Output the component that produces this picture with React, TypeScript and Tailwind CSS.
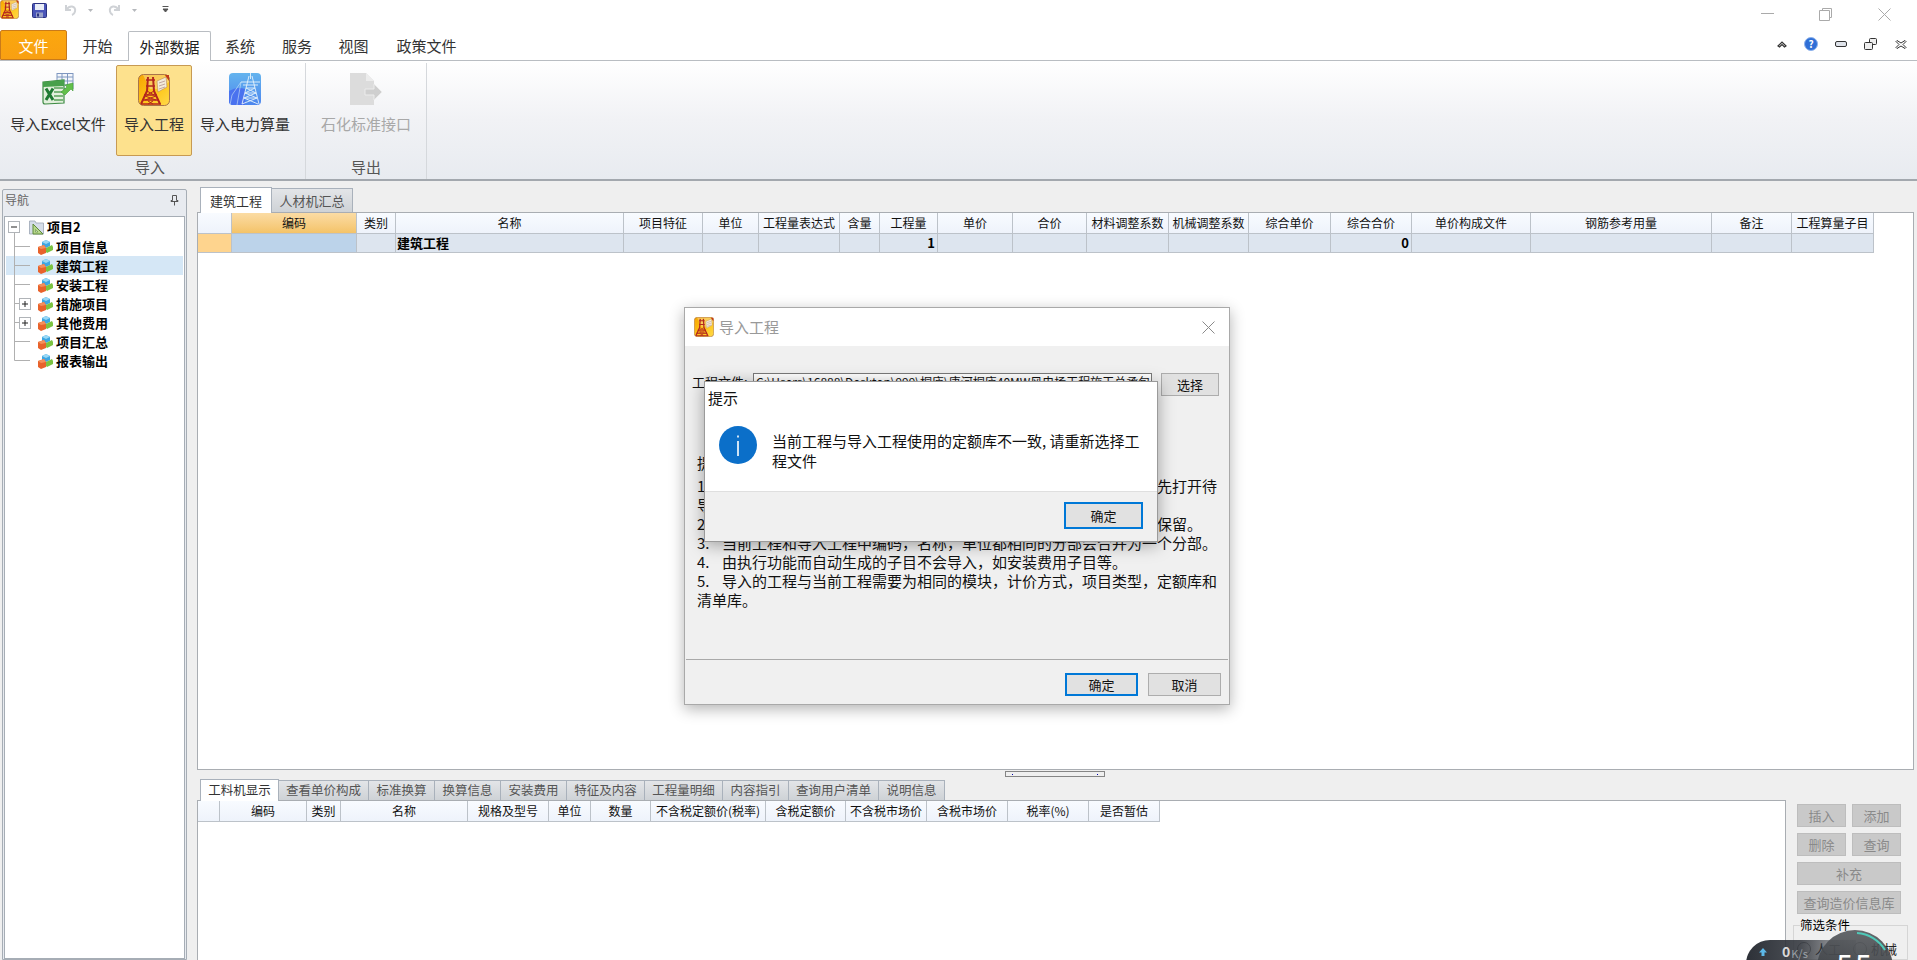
import React from "react";

const Logo = ({ s }: { s: number }) => (
  <svg width={s} height={s} viewBox="0 0 32 32" className="shrink-0">
    <defs>
      <linearGradient id="lg1" x1="0" y1="0" x2="1" y2="1">
        <stop offset="0" stopColor="#f7a400" />
        <stop offset="0.6" stopColor="#ffc81e" />
        <stop offset="1" stopColor="#ffd94a" />
      </linearGradient>
    </defs>
    <rect x="0.5" y="0.5" width="31" height="31" rx="5" fill="url(#lg1)" stroke="#a9744a" />
    <path d="M5 1 H26 L31 6 V8 L22 15 H12 Z" fill="#f6e2b0" opacity="0.45" />
    <path d="M19 7 L28 3 L29 13 L20 18 Z" fill="#f3ead8" stroke="#b98a55" strokeWidth="0.6" />
    <path d="M21 9 L27 7 M21 12 L27 10 M21 15 L27 13" stroke="#a88" strokeWidth="0.7" />
    <path d="M27 1 L31 1 L31 7 Z" fill="#c0391b" />
    <path d="M10 3 L9 17 L3 30 M15 3 L16 17 L22 30" fill="none" stroke="#b3261e" strokeWidth="2" />
    <path d="M8 6 H17 M8 12 H17 M6 21 H19 M4 26 H21 M3 30 H23" stroke="#b3261e" strokeWidth="1.6" />
    <path d="M9 17 L16 21 M16 17 L9 21 M7 22 L18 26 M18 22 L7 26 M10 27 L15 30 M15 27 L10 30" stroke="#b3261e" strokeWidth="1" />
  </svg>
);

const ExcelIcon = () => (
  <svg width="32" height="32" viewBox="0 0 32 32">
    <rect x="15" y="0.5" width="16" height="15" fill="#f3f6fb" stroke="#7f97c0" />
    <path d="M15 4 H31 M15 8 H31 M15 12 H31 M20 0 V16 M25.500 0 V16" stroke="#7f97c0" strokeWidth="1" />
    <path d="M1 9 L22 7 V30 L3 31 Q1 31 1 29 Z" fill="#e2efdc" stroke="#3d8b43" strokeWidth="1.2" />
    <path d="M1 9 L22 7 V13 L1 14 Z" fill="#47a04b" />
    <path d="M12 15 H21 M12 19 H21 M12 23 H21 M12 27 H21" stroke="#58a35a" strokeWidth="1.6" />
    <path d="M4 15.500 L11 27 M11 15.500 L4 27" stroke="#1f7a33" strokeWidth="3" />
    <path d="M19 19 L25 14 L23 12 L31 10 L31 18 L29 16 L23 22 Z" fill="#62bf4a" stroke="#3f9a35" strokeWidth="0.6" />
  </svg>
);

const PowerIcon = () => (
  <svg width="32" height="32" viewBox="0 0 32 32">
    <defs>
      <linearGradient id="pw" x1="0" y1="0" x2="0" y2="1">
        <stop offset="0" stopColor="#64b4ee" />
        <stop offset="1" stopColor="#4d86ee" />
      </linearGradient>
    </defs>
    <rect width="32" height="32" rx="4" fill="url(#pw)" />
    <path d="M0 18 Q8 13 16 16 V32 H4 Q0 32 0 28 Z" fill="#4a72ef" />
    <path d="M20 3 L17 15 L13 31 M23 3 L26 15 L30 31 M21.500 0 V6 M12 9 H31 M14 12 H29 M17 15 H26 M16 20 H27 M15 25 H28 M17 15 L27 20 M26 15 L16 20 M16 20 L28 25 M27 20 L15 25 M15 25 L29 31 M28 25 L13 31" fill="none" stroke="#e6f3fb" strokeWidth="0.9" />
    <path d="M12 9 L3 22 L1 32 M12 9 L8 32" fill="none" stroke="#cfe6f7" strokeWidth="0.6" />
  </svg>
);

const DocDisabled = () => (
  <svg width="32" height="32" viewBox="0 0 32 32">
    <path d="M0 0 H16 L24 8 V32 H0 Z" fill="#dcdcdc" />
    <path d="M16 0 V8 H24 Z" fill="#ececec" />
    <path d="M15 16 H24 V11 L32 19 L24 27 V22 H15 Z" fill="#cfcfcf" stroke="#ececec" />
  </svg>
);

const SaveIcon = () => (
  <svg width="15" height="15" viewBox="0 0 15 15">
    <rect x="0.500" y="0.500" width="14" height="14" rx="1" fill="#4a55b8" stroke="#2b3280" />
    <rect x="3" y="1" width="9" height="6" fill="#e9edf6" />
    <rect x="4" y="9.500" width="7" height="5" fill="#9aa2c8" />
    <rect x="5" y="10.500" width="2" height="3" fill="#2b3280" />
  </svg>
);

const Undo = ({ flip }: { flip?: boolean }) => (
  <svg width="13" height="14" viewBox="0 0 13 14" className={flip ? "-scale-x-100" : ""}>
    <path d="M2 2 V7 H7 M2.500 6.500 Q5 3 8 3.500 Q12 4.500 11 8.500 Q10.500 11 8 12" fill="none" stroke="#cfd2d6" strokeWidth="2" />
  </svg>
);

const Caret = () => (
  <svg width="5" height="3" viewBox="0 0 5 3">
    <path d="M0 0 H5 L2.500 3 Z" fill="#b5b8bc" />
  </svg>
);

const Cube = () => (
  <svg width="15" height="16" viewBox="0 0 15 16" className="shrink-0">
    <path d="M4 3 L8 1 L12 3 V7 L8 9 L4 7 Z" fill="#3ea7e2" />
    <path d="M4 3 L8 5 L12 3 L8 1 Z" fill="#9ad8f5" />
    <path d="M8 9 L14 6 L15 8 V11 L9 14 L7 12 Z" fill="#7cc341" />
    <path d="M0 8 L6 6 L8 9 V14 L3 16 L0 14 Z" fill="#e8622b" />
    <path d="M0 8 L6 6 L8 9 L3 10 Z" fill="#f58f5b" />
  </svg>
);

const FolderTri = () => (
  <svg width="15" height="15" viewBox="0 0 15 15" className="shrink-0">
    <path d="M0.500 1 H6 L7 3 H14.500 V14 H0.500 Z" fill="#d5dde8" stroke="#9aa5b4" strokeWidth="0.8" />
    <path d="M4 4 L14 14 H4 Z" fill="#b7d88c" stroke="#5e8a3a" />
    <path d="M6.500 9.500 L9 12 H6.500 Z" fill="#eef4e4" stroke="#5e8a3a" strokeWidth="0.6" />
  </svg>
);

const Connector = ({ last, box }: { last?: boolean; box?: boolean }) => (
  <svg width="32" height="19" viewBox="0 0 32 19" className="shrink-0">
    <path d={last ? "M8.500 0 V9.500" : "M8.500 0 V19"} stroke="#b0b0b0" fill="none" />
    <path d={box ? "M8.500 9.500 H13" : "M8.500 9.500 H24"} stroke="#b0b0b0" fill="none" />
    {box && (
      <g>
        <rect x="13.500" y="4.500" width="11" height="11" fill="#fff" stroke="#b0b4b8" />
        <path d="M16 10 H22 M19 7 V13" stroke="#222" />
      </g>
    )}
  </svg>
);

const treeRows = [
  { t: "项目信息" },
  { t: "建筑工程", sel: true },
  { t: "安装工程" },
  { t: "措施项目", box: true },
  { t: "其他费用", box: true },
  { t: "项目汇总" },
  { t: "报表输出", last: true },
];

const topCols = ["", "编码", "类别", "名称", "项目特征", "单位", "工程量表达式", "含量", "工程量", "单价", "合价", "材料调整系数", "机械调整系数", "综合单价", "综合合价", "单价构成文件", "钢筋参考用量", "备注", "工程算量子目"];
const botCols = ["", "编码", "类别", "名称", "规格及型号", "单位", "数量", "不含税定额价(税率)", "含税定额价", "不含税市场价", "含税市场价", "税率(%)", "是否暂估"];
const botTabs = [
  ["工料机显示", "w-[79px]"],
  ["查看单价构成", "w-[90px]"],
  ["标准换算", "w-[66px]"],
  ["换算信息", "w-[66px]"],
  ["安装费用", "w-[66px]"],
  ["特征及内容", "w-[78px]"],
  ["工程量明细", "w-[78px]"],
  ["内容指引", "w-[66px]"],
  ["查询用户清单", "w-[90px]"],
  ["说明信息", "w-[66px]"],
];

const cellBase = "flex items-center justify-center border-r border-b border-[#bcc2c9] h-[21px] text-[12px] text-[#111] whitespace-nowrap overflow-hidden bg-gradient-to-b from-[#f8fbff] to-[#eef3fb]";

const GrayBtn = ({ t, w }: { t: string; w: string }) => (
  <div className={`${w} h-[23px] flex items-center justify-center bg-[#c9c9c9] border border-[#bdbdbd] text-[13px] text-[#8a8a8a]`}>{t}</div>
);

const DlgBtn = ({ t, primary, w }: { t: string; primary?: boolean; w: string }) => (
  <div className={`${w} flex items-center justify-center bg-[#e1e1e1] text-[13px] text-[#111] ${primary ? "border-2 border-[#0078d7]" : "border border-[#adadad]"}`}>{t}</div>
);

export default function App() {
  return (
    <div className="relative w-[1917px] h-[960px] overflow-hidden flex flex-col bg-[#efefef] font-['Noto_Sans_CJK_SC','Noto_Sans',sans-serif] text-[#222]">
      {/* title bar */}
      <div className="h-[30px] bg-white flex items-start shrink-0">
        <div className="mt-0"><Logo s={19} /></div>
        <div className="ml-[13px] mt-[3px]"><SaveIcon /></div>
        <div className="ml-[17px] mt-[3px]"><Undo /></div>
        <div className="ml-[11px] mt-[9px]"><Caret /></div>
        <div className="ml-[15px] mt-[3px]"><Undo flip /></div>
        <div className="ml-[11px] mt-[9px]"><Caret /></div>
        <svg width="7" height="8" viewBox="0 0 7 8" className="ml-[25px] mt-[6px]">
          <path d="M0.500 0.500 H6.500 M1 3 H6 L3.500 6 Z" stroke="#555" fill="#555" />
        </svg>
        <div className="ml-auto flex items-start">
          <div className="w-[13px] h-px bg-[#aaa] mt-[13px] mr-[45px]" />
          <svg width="13" height="13" viewBox="0 0 13 13" className="mt-[8px] mr-[46px]">
            <path d="M3.500 2.500 V0.500 H12.500 V9.500 H10.500 M0.500 2.500 H10.500 V12.500 H0.500 Z" fill="none" stroke="#aaa" />
          </svg>
          <svg width="13" height="13" viewBox="0 0 13 13" className="mt-[8px] mr-[26px]">
            <path d="M0.500 0.500 L12.500 12.500 M12.500 0.500 L0.500 12.500" stroke="#aaa" />
          </svg>
        </div>
      </div>

      {/* tab row */}
      <div className="h-[31px] shrink-0 bg-white border-b border-[#b9bdc2] flex items-end text-[15px] leading-[29px] text-[#333]">
        <div className="w-[67px] h-[30px] flex items-center justify-center rounded-t-[2px] border border-[#c97a1a] bg-gradient-to-b from-[#fba70e] to-[#f9a012] text-white">文件</div>
        <div className="w-[61px] h-[29px] text-center">开始</div>
        <div className="w-[83px] h-[30px] -mb-px text-center bg-white border border-b-0 border-[#b9bdc2] rounded-t-[2px] text-[#222]">外部数据</div>
        <div className="w-[58px] h-[29px] text-center">系统</div>
        <div className="w-[56px] h-[29px] text-center">服务</div>
        <div className="w-[57px] h-[29px] text-center">视图</div>
        <div className="w-[86px] h-[29px] text-center pl-[3px]">政策文件</div>
        <div className="ml-auto flex items-center h-[29px] pb-[3px]">
          <svg width="10" height="8" viewBox="0 0 10 8" className="mr-[17px]">
            <path d="M1 6 L5 2 L9 6 L7.500 7 L5 4.500 L2.500 7 Z" fill="#fff" stroke="#333" strokeWidth="1.200" />
          </svg>
          <div className="w-[14px] h-[14px] rounded-full bg-[#2f6fd6] border border-[#8db2ec] flex items-center justify-center text-white text-[10px] font-bold leading-none mr-[17px]">?</div>
          <div className="w-[12px] h-[6px] rounded-[2px] border border-[#333] bg-[#dfe3ea] mr-[17px]" />
          <svg width="13" height="12" viewBox="0 0 13 12" className="mr-[18px]">
            <rect x="5.500" y="0.500" width="7" height="6" fill="#eee" stroke="#333" rx="1" />
            <rect x="0.500" y="4.500" width="8" height="7" fill="#eee" stroke="#333" rx="1" />
          </svg>
          <svg width="12" height="11" viewBox="0 0 12 11" className="mr-[10px]">
            <path d="M2 1.500 L6 4 L10 1.500 L11 2.500 L8 5.500 L11 8.500 L10 9.500 L6 7 L2 9.500 L1 8.500 L4 5.500 L1 2.500 Z" fill="#fff" stroke="#333" />
          </svg>
        </div>
      </div>

      {/* ribbon */}
      <div className="h-[120px] shrink-0 flex border-b-2 border-[#a3a8ae] bg-gradient-to-b from-white via-[#f1f2f5] to-[#e8ebf0]">
        <div className="w-[306px] flex flex-col border-r border-[#d5d8dc] mt-[2px] h-[116px]">
          <div className="flex pl-[4px] pt-[2px] h-[93px] text-[15px] leading-[20px] text-[#333]">
            <div className="w-[112px] flex flex-col items-center pt-[8px] pr-[4px]">
              <ExcelIcon />
              <div className="mt-[9px] whitespace-nowrap">导入Excel文件</div>
            </div>
            <div className="w-[76px] flex flex-col items-center pt-[8px] bg-[#fde18d] border border-[#c79a53] rounded-[2px]">
              <Logo s={32} />
              <div className="mt-[8px] whitespace-nowrap">导入工程</div>
            </div>
            <div className="w-[106px] flex flex-col items-center pt-[8px]">
              <PowerIcon />
              <div className="mt-[9px] whitespace-nowrap">导入电力算量</div>
            </div>
          </div>
          <div className="text-[15px] text-[#555] pl-[135px] mt-[1px] leading-[20px]">导入</div>
        </div>
        <div className="w-[121px] flex flex-col border-r border-[#d5d8dc] mt-[2px] h-[116px] items-center">
          <div className="pt-[10px] h-[93px] flex flex-col items-center">
            <DocDisabled />
            <div className="mt-[9px] whitespace-nowrap text-[15px] leading-[20px] text-[#a8a8a8]">石化标准接口</div>
          </div>
          <div className="text-[15px] text-[#555] mt-[1px] leading-[20px]">导出</div>
        </div>
      </div>

      {/* body */}
      <div className="flex-1 flex min-h-0">
        {/* navigation */}
        <div className="w-[185px] ml-[2px] mt-[8px] shrink-0 flex flex-col border border-[#a6adb5] rounded-t-[2px] bg-[#e8ebf0]">
          <div className="h-[26px] shrink-0 flex items-center justify-between pl-[2px] pr-[3px] pb-[6px] text-[12px] text-[#666]">
            <span>导航</span>
            <svg width="9" height="11" viewBox="0 0 9 11" className="mr-[4px]">
              <path d="M2.500 0.500 H6.500 V5.500 H8 V6.500 H1 V5.500 H2.500 Z M4.500 6.500 V10.500" fill="none" stroke="#555" />
            </svg>
          </div>
          <div className="flex-1 mx-[1px] bg-white border border-[#a6adb5] px-[1px]">
            <div className="h-[20px] flex items-center text-[13px] font-bold text-black">
              <svg width="23" height="20" viewBox="0 0 23 20" className="shrink-0">
                <rect x="2.500" y="4.500" width="11" height="11" fill="#fff" stroke="#b0b4b8" />
                <path d="M5 10 H11" stroke="#222" />
                <path d="M8.500 15.500 V20" stroke="#b0b0b0" />
              </svg>
              <FolderTri />
              <span className="ml-[3px]">项目2</span>
            </div>
            {treeRows.map((r) => (
              <div key={r.t} className={`h-[19px] flex items-center text-[13px] font-bold text-black ${r.sel ? "bg-[#d5e7f6]" : ""}`}>
                <Connector last={r.last} box={r.box} />
                <Cube />
                <span className="ml-[3px] leading-none whitespace-nowrap">{r.t}</span>
              </div>
            ))}
          </div>
        </div>

        {/* main */}
        <div className="ml-[10px] flex-1 min-w-0 flex flex-col">
          <div className="h-[31px] shrink-0 flex items-end pl-[3px] text-[13px]">
            <div className="w-[72px] h-[26px] -mb-px relative flex items-center justify-center bg-white border border-b-0 border-[#a9b1bb] text-[#333]">建筑工程</div>
            <div className="w-[81px] h-[24px] flex items-center justify-center bg-gradient-to-b from-[#e3e5e8] to-[#ced2d6] border border-b-0 border-l-0 border-[#a9b1bb] text-[#555]">人材机汇总</div>
          </div>
          <div className="w-[1717px] h-[558px] shrink-0 bg-white border border-[#a9adb2]">
            <div className="grid grid-cols-[34px_125px_39px_228px_79px_56px_81px_40px_58px_75px_74px_82px_80px_82px_81px_119px_181px_80px_82px] w-max">
              {topCols.map((c, i) => (
                <div key={i} className={i === 1 ? "flex items-center justify-center border-r border-b border-[#bcc2c9] h-[21px] text-[12px] text-[#111] bg-gradient-to-b from-[#fbdca4] to-[#f4c368]" : cellBase}>{c}</div>
              ))}
              {topCols.map((c, i) => (
                <div
                  key={i}
                  className={`h-[19px] border-r border-b border-[#bcc2c9] flex items-center text-[13px] font-bold text-black whitespace-nowrap pr-[2px] ${
                    i === 0 ? "bg-[#fed48e]" : i === 1 ? "bg-[#bcd3ea]" : "bg-[#dde5ef]"
                  } ${i === 8 || i === 14 ? "justify-end" : ""} ${i === 3 ? "pl-[1px]" : ""}`}
                >
                  {i === 3 ? "建筑工程" : i === 8 ? "1" : i === 14 ? "0" : ""}
                </div>
              ))}
            </div>
          </div>
          <div className="h-[8px] shrink-0 relative">
            <div className="absolute left-[808px] top-[1px] w-[100px] h-[6px] border border-[#858585] flex items-center justify-between px-[6px]">
              <span className="w-px h-px bg-[#00a]" />
              <span className="w-px h-px bg-[#00a]" />
            </div>
          </div>
          <div className="h-[22px] shrink-0 flex items-end pl-[3px] text-[12.5px]">
            {botTabs.map(([t, w], i) => (
              <div
                key={t}
                className={`${w} flex items-center justify-center border border-b-0 whitespace-nowrap border-[#a9b1bb] ${
                  i === 0
                    ? "h-[22px] -mb-px relative bg-white text-[#333]"
                    : "h-[20px] border-l-0 bg-gradient-to-b from-[#e3e5e8] to-[#ced2d6] text-[#555]"
                }`}
              >
                {t}
              </div>
            ))}
          </div>
          <div className="flex-1 flex min-h-0">
            <div className="w-[1589px] shrink-0 bg-white border-l border-t border-r border-[#a9adb2]">
              <div className="grid grid-cols-[22px_87px_34px_127px_81px_42px_60px_115px_80px_81px_81px_81px_71px] w-max">
                {botCols.map((c, i) => (
                  <div key={i} className={cellBase}>{c}</div>
                ))}
              </div>
            </div>
            <div className="ml-[11px] w-[115px] pt-[4px] flex flex-col">
              <div className="flex gap-[6px]">
                <GrayBtn t="插入" w="w-[49px]" />
                <GrayBtn t="添加" w="w-[49px]" />
              </div>
              <div className="flex gap-[6px] mt-[6px]">
                <GrayBtn t="删除" w="w-[49px]" />
                <GrayBtn t="查询" w="w-[49px]" />
              </div>
              <div className="mt-[6px]"><GrayBtn t="补充" w="w-[104px]" /></div>
              <div className="mt-[6px]"><GrayBtn t="查询造价信息库" w="w-[104px]" /></div>
              <div className="mt-[11px] -ml-[4px] w-[115px] h-[60px] border border-[#d5d5d5] relative">
                <div className="absolute -top-[10px] left-[6px] bg-[#efefef] text-[12.5px] leading-[18px] text-black">筛选条件</div>
                <div className="flex items-center mt-[14px] ml-[3px] text-[13px] text-[#222] h-[18px]">
                  <span className="w-[14px] h-[14px] rounded-full border border-[#888]" />
                  <span className="ml-[4px] w-[38px]">人工</span>
                  <span className="w-[14px] h-[14px] rounded-full border border-[#888]" />
                  <span className="ml-[4px]">机械</span>
                </div>
              </div>
            </div>
          </div>
        </div>
      </div>

      {/* speed widget */}
      <div className="absolute left-[1746px] top-[940px] w-[110px] h-[40px] rounded-tl-[24px] bg-gradient-to-r from-[#2d3138] via-[#2d3138]/85 to-[#2d3138]/25 flex items-start text-white">
        <svg width="10" height="10" viewBox="0 0 10 10" className="ml-[12px] mt-[7px]">
          <path d="M5 1 L9 5.500 H6.500 V9 H3.500 V5.500 H1 Z" fill="#5cb8e8" />
        </svg>
        <span className="ml-[14px] mt-[1px] text-[14px] font-bold leading-[20px] text-[#d8d8d8]">0</span>
        <span className="ml-[1px] mt-[3px] text-[11px] leading-[20px] text-[#9aa0a6]">K/s</span>
      </div>
      <div className="absolute left-[1817px] top-[930px] w-[76px] h-[76px] rounded-full bg-gradient-to-b from-[#55585c]/90 to-[#2e3237]/95 flex justify-center text-white">
        <span className="mt-[16px] text-[30px] leading-[36px] tracking-[2px]">55</span>
        <svg width="76" height="76" viewBox="0 0 76 76" className="absolute inset-0">
          <path d="M40 3 A35 35 0 0 1 68 20" fill="none" stroke="#4fc9b8" strokeWidth="2" />
        </svg>
      </div>

      {/* import dialog */}
      <div className="absolute left-[684px] top-[307px] w-[546px] h-[398px] bg-[#f0f0f0] border border-[#a9a9a9] shadow-[0_4px_14px_rgba(0,0,0,0.3)] flex flex-col">
        <div className="h-[38px] shrink-0 bg-white flex items-center pl-[9px] pr-[14px]">
          <Logo s={20} />
          <span className="ml-[5px] text-[15px] text-[#999]">导入工程</span>
          <svg width="13" height="13" viewBox="0 0 13 13" className="ml-auto">
            <path d="M0.500 0.500 L12.500 12.500 M12.500 0.500 L0.500 12.500" stroke="#8a8a8a" />
          </svg>
        </div>
        <div className="h-[313px] shrink-0 pl-[12px] pr-[9px] pt-[27px] text-[15px] leading-[19px] text-[#111] relative">
          <div className="flex items-start h-[24px]">
            <span className="w-[61px] shrink-0 text-[13px] leading-[18px] whitespace-nowrap -ml-[5px]">工程文件:</span>
            <div className="w-[399px] shrink-0 h-[21px] bg-white border border-[#7a7a7a] text-[12px] leading-[15px] px-[2px] overflow-hidden whitespace-nowrap">C:\Users\16888\Desktop\999\桐庐\唐河桐庐40MW风电场工程施工总承包工程</div>
            <div className="ml-[9px] w-[58px] shrink-0 h-[23px] bg-[#e1e1e1] border border-[#adadad] flex items-center justify-center text-[13px]">选择</div>
          </div>
          <div className="mt-[56px] whitespace-nowrap">
            <div>提示:</div>
            <div className="mt-[4px]"><span className="inline-block w-[25px]">1.</span>导入工程功能可以将其他工程的分部分项数据导入到当前工程，请先打开待</div>
            <div>导入工程。</div>
            <div><span className="inline-block w-[25px]">2.</span>当前工程中已有的数据不会被覆盖，导入的数据将追加到后面并予保留。</div>
            <div><span className="inline-block w-[25px]">3.</span>当前工程和导入工程中编码，名称，单位都相同的分部会合并为一个分部。</div>
            <div><span className="inline-block w-[25px]">4.</span>由执行功能而自动生成的子目不会导入，如安装费用子目等。</div>
            <div><span className="inline-block w-[25px]">5.</span>导入的工程与当前工程需要为相同的模块，计价方式，项目类型，定额库和</div>
            <div>清单库。</div>
          </div>
        </div>
        <div className="flex-1 border-t border-[#a9a9a9] flex items-start justify-end pt-[13px] pr-[7px] gap-[10px] mx-px">
          <DlgBtn t="确定" primary w="w-[73px] h-[23px]" />
          <DlgBtn t="取消" w="w-[73px] h-[23px]" />
        </div>
      </div>

      {/* message box */}
      <div className="absolute left-[704px] top-[381px] w-[454px] h-[161px] bg-[#f0f0f0] border border-[#9a9a9a] shadow-[0_3px_16px_rgba(0,0,0,0.35)] flex flex-col">
        <div className="h-[110px] bg-white border-b border-[#dfdfdf] shrink-0 relative">
          <div className="pl-[3px] pt-[6px] text-[15px] leading-[20px] text-[#111]">提示</div>
          <div className="flex items-start mt-[18px] pl-[14px]">
            <svg width="38" height="38" viewBox="0 0 38 38" className="shrink-0">
              <circle cx="19" cy="19" r="19" fill="#0b6fc9" />
              <rect x="18.200" y="15" width="1.600" height="15" fill="#fff" />
              <rect x="18.200" y="9.500" width="1.600" height="2" fill="#fff" />
            </svg>
            <div className="ml-[15px] w-[372px] mt-[5px] text-[15px] leading-[20px] text-[#111]">当前工程与导入工程使用的定额库不一致, 请重新选择工程文件</div>
          </div>
        </div>
        <div className="flex-1 flex justify-end pt-[10px] pr-[14px]">
          <DlgBtn t="确定" primary w="w-[79px] h-[27px]" />
        </div>
      </div>
    </div>
  );
}
